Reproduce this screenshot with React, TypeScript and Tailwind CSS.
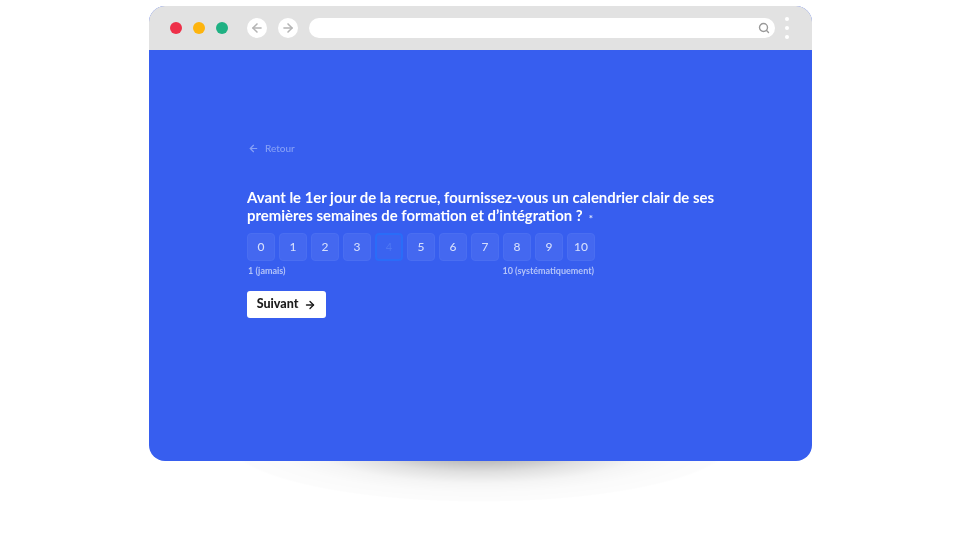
import { ArrowLeft, ArrowRight, Search } from "lucide-react";

const nums = [0, 1, 2, 3, 4, 5, 6, 7, 8, 9, 10];

export default function App() {
  return (
    <div className="relative w-[960px] h-[540px] overflow-hidden bg-white pt-[6px] pl-[149px] font-['Lato',sans-serif]">
      <div className="absolute left-[225px] top-[378px] w-[510px] h-[124px] rounded-[50%] blur-[0.5px] bg-[radial-gradient(closest-side,rgba(0,0,0,0.36)_0%,rgba(0,0,0,0.26)_34%,rgba(0,0,0,0.12)_52%,rgba(0,0,0,0.04)_70%,rgba(0,0,0,0.015)_85%,rgba(0,0,0,0.012)_98%,rgba(0,0,0,0)_100%)]" />
      <div className="relative w-[663px] h-[455px] rounded-[16px] overflow-hidden flex flex-col bg-[#375eef] blur-[0.6px]">
        <div className="h-[43.5px] shrink-0 bg-[#e2e2e2] flex items-center pl-[21px]">
          <span className="w-[12px] h-[12px] rounded-full bg-[#ee3049]" />
          <span className="w-[12px] h-[12px] rounded-full bg-[#fdb40e] ml-[11px]" />
          <span className="w-[12px] h-[12px] rounded-full bg-[#1fb183] ml-[11px]" />
          <span className="w-[20px] h-[20px] rounded-full bg-white ml-[19px] flex items-center justify-center text-[#b4b4b4]">
            <ArrowLeft size={14} strokeWidth={2.6} />
          </span>
          <span className="w-[20px] h-[20px] rounded-full bg-white ml-[11px] flex items-center justify-center text-[#b4b4b4]">
            <ArrowRight size={14} strokeWidth={2.6} />
          </span>
          <div className="w-[466px] h-[20px] rounded-full bg-white ml-[11px] flex items-center justify-end pr-[5px] text-[#9a9a9a]">
            <Search size={12} strokeWidth={2.8} />
          </div>
          <div className="ml-[10px] flex flex-col gap-[5px]">
            <span className="w-[4px] h-[4px] rounded-full bg-white" />
            <span className="w-[4px] h-[4px] rounded-full bg-white" />
            <span className="w-[4px] h-[4px] rounded-full bg-white" />
          </div>
        </div>
        <div className="flex-1 pl-[98px] pt-[90.5px] flex flex-col items-start">
          <div className="flex items-center h-[16px] text-[#86a0f6] text-[10px] font-medium">
            <ArrowLeft size={11} strokeWidth={2.6} className="ml-[1px]" />
            <span className="ml-[6px]">Retour</span>
          </div>
          <div className="mt-[32px] w-[490px] text-white font-bold text-[14.9px] leading-[18px]">
            Avant le 1er jour de la recrue, fournissez-vous un calendrier clair de ses premières semaines de formation et d’intégration ?
            <span className="ml-[6px] inline-block translate-y-[1px] text-[10px] text-[#dfe6fd]">*</span>
          </div>
          <div className="mt-[7px] flex gap-[4px]">
            {nums.map((n) => (
              <div
                key={n}
                className={
                  n === 4
                    ? "w-[28px] h-[28px] rounded-[4px] bg-[#3a63f0] border-2 border-[#2a6cf8] flex items-center justify-center text-[11px] text-[#4f77f3]"
                    : "w-[28px] h-[28px] rounded-[4px] bg-[#4468f0] border border-[#4a6ef1] flex items-center justify-center text-[12px] font-medium text-[#d5defc]"
                }
              >
                {n}
              </div>
            ))}
          </div>
          <div className="mt-[4px] w-[347px] flex justify-between text-[9px] leading-[12px] font-bold text-[#b4c4f9]">
            <span className="ml-[1px]">1 (jamais)</span>
            <span>10 (systématiquement)</span>
          </div>
          <button className="mt-[14px] w-[79px] h-[27px] rounded-[3px] bg-white flex items-center justify-center gap-[6px] text-[12.5px] font-black text-[#1c1c1c]">
            Suivant
            <ArrowRight size={12} strokeWidth={2.8} />
          </button>
        </div>
      </div>
    </div>
  );
}
